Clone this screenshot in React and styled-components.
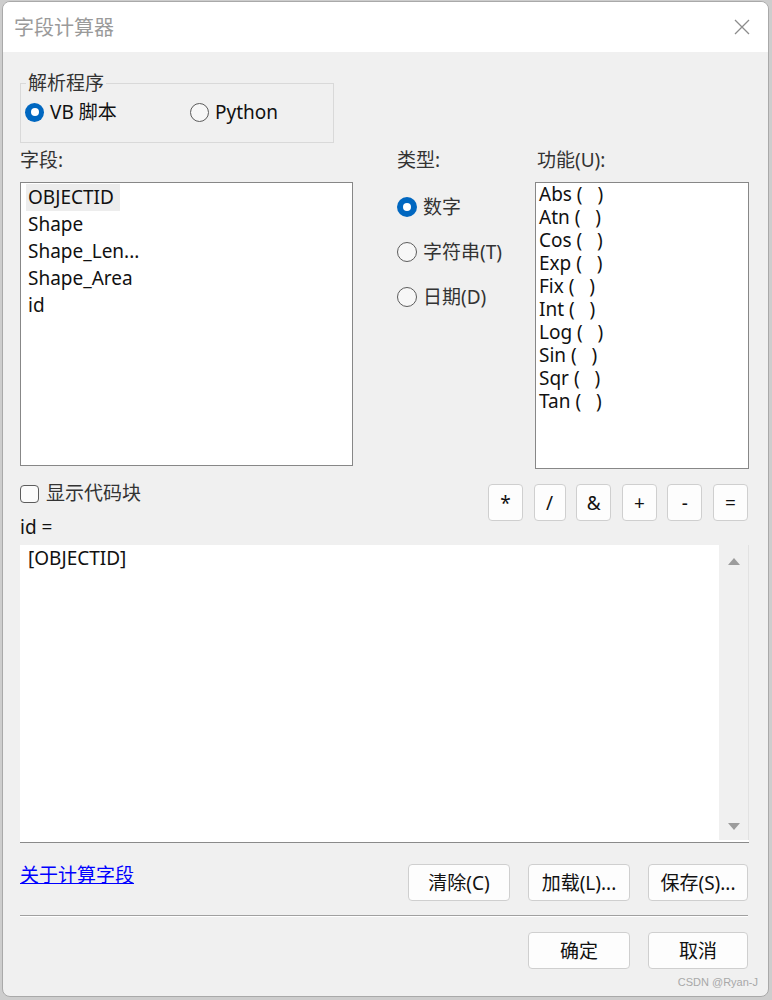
import React from "react";
import styled, { createGlobalStyle } from "styled-components";

const GlobalStyle = createGlobalStyle`
  html, body {
    margin: 0;
    padding: 0;
    background: #cdcdcd;
  }
  body {
    font-family: "Noto Sans", "Noto Sans CJK SC", sans-serif;
    font-size: 19px;
    color: #111;
  }
`;

const Dialog = styled.div`
  position: relative;
  box-sizing: border-box;
  margin: 1px 0 0 2px;
  width: 767px;
  height: 996px;
  border: 1px solid #a9a9a9;
  border-radius: 8px;
  overflow: hidden;
  background: #f0f0f0;
  display: flex;
  flex-direction: column;
`;

const TitleBar = styled.div`
  height: 50px;
  flex: none;
  background: #fff;
  display: flex;
  align-items: center;
  justify-content: space-between;
  padding: 0 18px 0 11px;
`;

const Title = styled.div`
  font-family: "Noto Sans CJK SC", sans-serif;
  font-size: 20px;
  line-height: 26px;
  color: #9a9a9a;
`;

const Body = styled.div`
  padding: 0 19px 0 17px;
  display: flex;
  flex-direction: column;
`;

const GroupBox = styled.fieldset`
  box-sizing: border-box;
  margin: 20px 0 0;
  width: 314px;
  min-width: 0;
  padding: 7px 0 19px 4px;
  border: 1px solid #d9d9d9;
`;

const Legend = styled.legend`
  margin-left: 1px;
  padding: 0 2px;
  font-size: 19px;
  line-height: 22px;
  color: #333;
`;

const RadioRow = styled.div`
  display: grid;
  grid-template-columns: 165px auto;
`;

const RadioItem = styled.label`
  display: flex;
  align-items: center;
  gap: 6px;
  height: 22px;
  line-height: 22px;
  white-space: nowrap;
  color: ${(p) => (p.$dim ? "#333" : "#111")};
`;

const RadioDot = styled.span`
  box-sizing: border-box;
  flex: none;
  width: ${(p) => p.$size}px;
  height: ${(p) => p.$size}px;
  border-radius: 50%;
  display: flex;
  align-items: center;
  justify-content: center;
  background: ${(p) => (p.$checked ? "#0067c0" : "#f7f7f7")};
  border: ${(p) => (p.$checked ? "none" : "1px solid #5c5c5c")};

  &::after {
    content: "";
    display: ${(p) => (p.$checked ? "block" : "none")};
    width: 8px;
    height: 8px;
    border-radius: 50%;
    background: #fff;
  }
`;

const TopGrid = styled.div`
  margin-top: 6px;
  display: grid;
  grid-template-columns: 333px 182px 214px;
`;

const Column = styled.div`
  display: flex;
  flex-direction: column;
  padding-left: ${(p) => p.$indent || 0}px;
`;

const SectionLabel = styled.div`
  line-height: 22px;
  margin-bottom: 11px;
  color: #333;
  padding-left: ${(p) => p.$indent || 0}px;
`;

const ListBox = styled.div`
  box-sizing: border-box;
  height: ${(p) => p.$height}px;
  background: #fff;
  border: 1px solid #878787;
  padding: ${(p) => p.$pad};
  display: flex;
  flex-direction: column;
  align-items: flex-start;
`;

const FieldItem = styled.div`
  line-height: 27px;
  padding: 0 6px 0 2px;
  background: ${(p) => (p.$selected ? "#ededed" : "transparent")};
  white-space: nowrap;
`;

const FuncItem = styled.div`
  height: 23px;
  line-height: 23px;
  white-space: pre;
`;

const TypeList = styled.div`
  display: flex;
  flex-direction: column;
  gap: 23px;
  padding-top: 14px;
`;

const MidRow = styled.div`
  margin-top: 15px;
  display: flex;
  justify-content: space-between;
  align-items: flex-start;
`;

const LeftStack = styled.div`
  display: flex;
  flex-direction: column;
`;

const CheckRow = styled.label`
  display: flex;
  align-items: center;
  gap: 7px;
  height: 19px;
  line-height: 19px;
  color: #333;
`;

const CheckBox = styled.span`
  box-sizing: border-box;
  width: 19px;
  height: 18px;
  border: 1px solid #5c5c5c;
  border-radius: 4px;
  background: #fbfbfb;
`;

const ExprLabel = styled.div`
  margin-top: 13px;
  line-height: 22px;
`;

const OpGroup = styled.div`
  display: flex;
  gap: 10.6px;
  padding-right: 1px;
`;

const Button = styled.button`
  box-sizing: border-box;
  width: ${(p) => p.$w}px;
  height: 37px;
  padding: 0;
  margin: 0;
  border: 1px solid #cfcfcf;
  border-radius: 4px;
  background: #fdfdfd;
  font-family: "Noto Sans", "Noto Sans CJK SC", sans-serif;
  font-size: 19px;
  line-height: 22px;
  color: #111;
  display: flex;
  align-items: center;
  justify-content: center;
`;

const Editor = styled.div`
  margin-top: 7px;
  height: 298px;
  box-sizing: border-box;
  display: flex;
  background: #fff;
  border-bottom: 1px solid #8a8a8a;
`;

const EditorText = styled.div`
  flex: 1;
  padding: 2px 8px;
  line-height: 22px;
`;

const ScrollBar = styled.div`
  width: 30px;
  box-sizing: border-box;
  background: #f0f0f0;
  border-right: 1px solid #e2e2e2;
  margin-bottom: 2px;
  display: flex;
  flex-direction: column;
  align-items: center;
  justify-content: space-between;
  padding: 13px 0 10px;
`;

const Arrow = styled.span`
  width: 0;
  height: 0;
  border-left: 6px solid transparent;
  border-right: 6px solid transparent;
  ${(p) =>
    p.$down
      ? "border-top: 7px solid #9c9c9c;"
      : "border-bottom: 7px solid #9c9c9c;"}
`;

const FooterRow = styled.div`
  margin-top: 21px;
  display: flex;
  align-items: flex-start;
  justify-content: space-between;
  padding-right: 1px;
`;

const HelpLink = styled.a`
  line-height: 22px;
  color: #0000ff;
  text-decoration: underline;
  cursor: pointer;
`;

const ButtonGroup = styled.div`
  display: flex;
  gap: 18px;
`;

const Separator = styled.div`
  margin-top: 14px;
  width: 728px;
  border-top: 1px solid #a0a0a0;
  border-bottom: 1px solid #fff;
`;

const DialogActions = styled.div`
  margin-top: 15px;
  display: flex;
  justify-content: flex-end;
  gap: 18px;
  padding-right: 1px;
`;

const Watermark = styled.div`
  position: absolute;
  right: 10px;
  bottom: 7px;
  font-family: "Liberation Sans", sans-serif;
  font-size: 11px;
  line-height: 13px;
  color: #a8a8a8;
`;

const fields = ["OBJECTID", "Shape", "Shape_Len...", "Shape_Area", "id"];
const funcs = ["Abs", "Atn", "Cos", "Exp", "Fix", "Int", "Log", "Sin", "Sqr", "Tan"];
const ops = [
  { t: "*", w: 35 },
  { t: "/", w: 32 },
  { t: "&", w: 35 },
  { t: "+", w: 35 },
  { t: "-", w: 35 },
  { t: "=", w: 35 },
];

function CloseIcon() {
  return (
    <svg width="16" height="16" viewBox="0 0 16 16">
      <path d="M1 1 L15 15 M15 1 L1 15" stroke="#8c8c8c" strokeWidth="1.3" fill="none" />
    </svg>
  );
}

export default function App() {
  return (
    <>
      <GlobalStyle />
      <Dialog>
        <TitleBar>
          <Title>字段计算器</Title>
          <CloseIcon />
        </TitleBar>
        <Body>
          <GroupBox>
            <Legend>解析程序</Legend>
            <RadioRow>
              <RadioItem>
                <RadioDot $size={19} $checked />
                VB 脚本
              </RadioItem>
              <RadioItem>
                <RadioDot $size={19} />
                Python
              </RadioItem>
            </RadioRow>
          </GroupBox>

          <TopGrid>
            <Column>
              <SectionLabel>字段:</SectionLabel>
              <ListBox $height={284} $pad="1px 0 0 5px">
                {fields.map((f, i) => (
                  <FieldItem key={f} $selected={i === 0}>
                    {f}
                  </FieldItem>
                ))}
              </ListBox>
            </Column>
            <Column $indent={44}>
              <SectionLabel>类型:</SectionLabel>
              <TypeList>
                <RadioItem $dim>
                  <RadioDot $size={20} $checked />
                  数字
                </RadioItem>
                <RadioItem $dim>
                  <RadioDot $size={20} />
                  字符串(T)
                </RadioItem>
                <RadioItem $dim>
                  <RadioDot $size={20} />
                  日期(D)
                </RadioItem>
              </TypeList>
            </Column>
            <Column>
              <SectionLabel $indent={2}>功能(U):</SectionLabel>
              <ListBox $height={287} $pad="0 0 0 3px">
                {funcs.map((f) => (
                  <FuncItem key={f}>{`${f} (   )`}</FuncItem>
                ))}
              </ListBox>
            </Column>
          </TopGrid>

          <MidRow>
            <LeftStack>
              <CheckRow>
                <CheckBox />
                显示代码块
              </CheckRow>
              <ExprLabel>id =</ExprLabel>
            </LeftStack>
            <OpGroup>
              {ops.map((o) => (
                <Button key={o.t} $w={o.w}>
                  {o.t}
                </Button>
              ))}
            </OpGroup>
          </MidRow>

          <Editor>
            <EditorText>[OBJECTID]</EditorText>
            <ScrollBar>
              <Arrow />
              <Arrow $down />
            </ScrollBar>
          </Editor>

          <FooterRow>
            <HelpLink>关于计算字段</HelpLink>
            <ButtonGroup>
              <Button $w={102}>清除(C)</Button>
              <Button $w={102}>加载(L)...</Button>
              <Button $w={100}>保存(S)...</Button>
            </ButtonGroup>
          </FooterRow>

          <Separator />

          <DialogActions>
            <Button $w={102}>确定</Button>
            <Button $w={100}>取消</Button>
          </DialogActions>
        </Body>
        <Watermark>CSDN @Ryan-J</Watermark>
      </Dialog>
    </>
  );
}
